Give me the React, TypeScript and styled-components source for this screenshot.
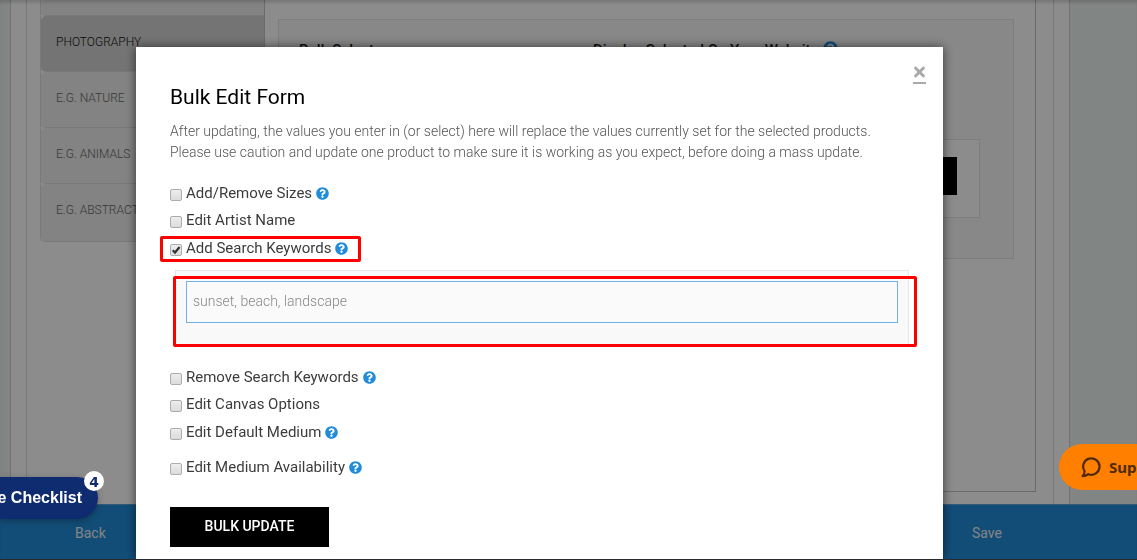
import React from 'react';
import styled, { createGlobalStyle } from 'styled-components';
import { FaQuestionCircle, FaTimes } from 'react-icons/fa';

const GlobalStyle = createGlobalStyle`
  * { box-sizing: border-box; }
  html, body { margin: 0; height: 100%; overflow: hidden; }
  body {
    background: #ecf2ee;
    font-family: Roboto, "Liberation Sans", sans-serif;
    font-size: 14px;
    color: #333;
  }
  #root { height: 100%; }
  h1, h2, p, ul { margin: 0; padding: 0; }
  button, textarea { font-family: inherit; }
`;

const Page = styled.div`
  display: flex;
  flex-direction: column;
  height: 100vh;
  overflow: hidden;
  border-bottom: 1px solid #2b2a30;
`;

const Content = styled.div`
  flex: 1;
  min-height: 0;
  margin: 0 67px 0 10px;
  padding: 0 15px;
  background: #fff;
  border: solid #cfcfcf;
  border-width: 0 1px;
`;

const Frame = styled.div`
  display: flex;
  align-items: flex-start;
  height: 100%;
  padding: 0 17px 0 13px;
  border: solid #dcdcdc;
  border-width: 0 1px;
`;

const Sidebar = styled.nav`
  width: 224px;
  flex: none;
`;

const Categories = styled.ul`
  list-style: none;
  border: solid #dcdcdc;
  border-width: 0 0 1px 1px;
  border-radius: 0 0 0 5px;
  overflow: hidden;
`;

const Category = styled.li<{ $active?: boolean; $short?: boolean }>`
  height: ${p => (p.$short ? 16 : 56)}px;
  background: ${p => (p.$active ? '#d3d3d3' : '#efefef')};
  border-bottom: 1px solid #dcdcdc;
  border-radius: 5px 0 0 5px;
  &:last-child { height: 57px; border-bottom: 0; }
`;

const CategoryLink = styled.a<{ $active?: boolean }>`
  display: block;
  padding: 0 15px;
  font-size: 12px;
  font-weight: 300;
  line-height: 52px;
  color: ${p => (p.$active ? '#111' : '#666')};
  text-decoration: none;
`;

const Main = styled.main`
  flex: 1;
  height: 492px;
  padding: 19px 21px 0 13px;
  border: solid #c4c4c4;
  border-width: 0 1px 1px;
`;

const Card = styled.section`
  height: 240px;
  padding: 20px 33px 0 20px;
  background: #f8f8f8;
  border: 1px solid #e3e3e3;
`;

const CardHeads = styled.div`
  display: grid;
  grid-template-columns: 294px 1fr;
  height: 99px;
`;

const CardHead = styled.h2`
  display: flex;
  font-size: 15px;
  font-weight: 500;
  line-height: 20px;
  color: #222;
`;

const CardActions = styled.div`
  display: flex;
  justify-content: flex-end;
  height: 79px;
  padding: 17px 22px;
  background: #fff;
  border: 1px solid #e3e3e3;
`;

const ApplyButton = styled.button`
  width: 120px;
  height: 38px;
  border: 0;
  background: #000;
`;

const Footer = styled.footer`
  flex: none;
  display: flex;
  justify-content: space-between;
  height: 55px;
  padding: 0 135px 0 75px;
  background: #218cda;
  border-top: 1px solid #5ba6dc;
`;

const FooterLink = styled.a`
  font-size: 14px;
  line-height: 56px;
  color: #f0f0f0;
  text-decoration: none;
`;

const Overlay = styled.div`
  position: fixed;
  inset: 0 0 1px;
  z-index: 1;
  display: flex;
  padding: 47px 194px 0 136px;
  background: rgba(0, 0, 0, 0.45);
  box-shadow: inset 0 4px 4px -2px rgba(0, 0, 0, 0.2);
  overflow: hidden;
`;

const Dialog = styled.div`
  position: relative;
  flex: 1;
  min-width: 0;
  padding: 32px 34px 12px;
  background: #fff;
  box-shadow: 0 0 10px rgba(0, 0, 0, 0.6);
`;

const CloseButton = styled.button`
  position: absolute;
  top: 17px;
  right: 17px;
  display: flex;
  justify-content: center;
  width: 13px;
  height: 20px;
  padding: 0;
  border: 0;
  border-bottom: 2px solid #aaa;
  background: none;
  color: #aaa;
  font-size: 16px;
`;

const Title = styled.h1`
  font-size: 21px;
  font-weight: 400;
  line-height: 36px;
  color: #000;
`;

const Intro = styled.p`
  margin-top: 6px;
  font-size: 14px;
  font-weight: 300;
  line-height: 21px;
  color: #555;
`;

const Form = styled.form`
  display: flex;
  flex-direction: column;
  align-items: flex-start;
  padding-top: 16px;
`;

const Row = styled.div<{ $help?: boolean; $marked?: boolean; $spaced?: boolean }>`
  position: relative;
  display: flex;
  align-items: center;
  height: ${p => (p.$help ? 28 : 27)}px;
  padding-top: ${p => (p.$help ? 1 : 0)}px;
  margin-top: ${p => (p.$spaced ? 7 : 0)}px;
  ${p => p.$marked && `
    &::after {
      content: '';
      position: absolute;
      inset: 2px -13px 0 -10px;
      border: 3px solid #fe0000;
      border-radius: 2px;
      pointer-events: none;
    }
  `}
`;

const Check = styled.input`
  appearance: none;
  flex: none;
  width: 12px;
  height: 12px;
  margin: 3px 4px 0 0;
  border: 1px solid #adadad;
  border-radius: 2px;
  background: linear-gradient(#ededed, #dcdcdc);
  &:checked {
    background: url("data:image/svg+xml,%3Csvg xmlns='http://www.w3.org/2000/svg' viewBox='0 0 10 10'%3E%3Cpath d='M1.7 5.2 4 7.5 8.6 2' fill='none' stroke='%23333' stroke-width='2.2'/%3E%3C/svg%3E") center / 10px 10px no-repeat, linear-gradient(#ededed, #dcdcdc);
  }
`;

const RowLabel = styled.label`
  font-size: 15px;
  line-height: 27px;
  color: #3c3c3c;
`;

const Help = styled(FaQuestionCircle)`
  flex: none;
  width: 13px;
  height: 13px;
  margin-left: 4px;
  color: #218cda;
`;

const HeadHelp = styled(Help)`
  width: 15px;
  height: 15px;
  margin-top: 1px;
`;

const KeywordPanel = styled.div`
  position: relative;
  align-self: stretch;
  margin: 8px 0 18px 5px;
  padding: 10px;
  height: 75px;
  background: #f9f9f9;
  border: 1px solid #e6e6e6;
  &::after {
    content: '';
    position: absolute;
    inset: 5px -9px -3px -3px;
    border: 3px solid #fe0000;
    border-radius: 2px;
    pointer-events: none;
  }
`;

const Keywords = styled.textarea`
  display: block;
  width: 100%;
  height: 42px;
  padding: 9px 6px;
  border: 1px solid #6fb3e8;
  outline: 0;
  background: #fafafa;
  font-size: 14px;
  font-weight: 300;
  line-height: 20px;
  resize: none;
  overflow: hidden;
  &::placeholder { color: #888; }
`;

const SubmitButton = styled.button`
  width: 159px;
  height: 40px;
  margin-top: 26px;
  padding: 0 6px 2px;
  border: 0;
  background: #000;
  color: #fff;
  font-size: 14px;
  font-weight: 500;
`;

const ChecklistTab = styled.button`
  position: fixed;
  left: 0;
  bottom: 41px;
  z-index: 2;
  display: flex;
  align-items: center;
  justify-content: flex-end;
  width: 98px;
  height: 42px;
  padding: 0 16px 0 0;
  border: 0;
  border-radius: 0 21px 21px 0;
  background: #102c70;
  box-shadow: 0 2px 6px rgba(0, 0, 0, 0.3);
  color: #fff;
  font: 700 16px "Liberation Sans", sans-serif;
  white-space: nowrap;
`;

const Count = styled.span`
  position: absolute;
  top: -6px;
  right: -6px;
  width: 20px;
  height: 20px;
  border-radius: 50%;
  background: #fff;
  color: #102c70;
  font: 700 14px/22px "DejaVu Sans", sans-serif;
  text-align: center;
`;

const SupportTab = styled.button`
  position: fixed;
  right: 0;
  bottom: 70px;
  z-index: 2;
  display: flex;
  align-items: center;
  gap: 8px;
  width: 78px;
  height: 46px;
  padding: 0 0 0 22px;
  border: 0;
  border-radius: 23px 0 0 23px;
  background: #ff7f00;
  color: #4f2a08;
  font: 700 15px "Noto Sans", sans-serif;
  white-space: nowrap;
  overflow: hidden;
  svg { flex: none; }
`;

const Option = ({ id, label, help, checked, spaced }: {
  id: string; label: string; help?: boolean; checked?: boolean; spaced?: boolean;
}) => (
  <Row $help={help} $marked={checked} $spaced={spaced}>
    <Check type="checkbox" id={id} defaultChecked={checked} />
    <RowLabel htmlFor={id}>{label}</RowLabel>
    {help && <Help aria-hidden />}
  </Row>
);

const categories = ['Photography', 'e.g. Nature', 'e.g. Animals', 'e.g. Abstract'];

export default function App() {
  return (
    <>
      <GlobalStyle />
      <Page>
        <Content>
          <Frame>
            <Sidebar>
              <Categories>
                <Category $short />
                {categories.map((name, i) => (
                  <Category key={name} $active={i === 0}>
                    <CategoryLink href="#" $active={i === 0}>{name.toUpperCase()}</CategoryLink>
                  </Category>
                ))}
              </Categories>
            </Sidebar>
            <Main>
              <Card>
                <CardHeads>
                  <CardHead>Bulk Select</CardHead>
                  <CardHead>Display Selected On Your Website <HeadHelp aria-hidden /></CardHead>
                </CardHeads>
                <CardActions>
                  <ApplyButton type="button" aria-label="Apply" />
                </CardActions>
              </Card>
            </Main>
          </Frame>
        </Content>
        <Footer>
          <FooterLink href="#">Back</FooterLink>
          <FooterLink href="#">Save</FooterLink>
        </Footer>
      </Page>

      <Overlay>
        <Dialog role="dialog" aria-labelledby="bulk-title">
          <CloseButton type="button" aria-label="Close"><FaTimes /></CloseButton>
          <Title id="bulk-title">Bulk Edit Form</Title>
          <Intro>
            After updating, the values you enter in (or select) here will replace the values currently set for the selected products.<br />
            Please use caution and update one product to make sure it is working as you expect, before doing a mass update.
          </Intro>
          <Form>
            <Option id="sizes" label="Add/Remove Sizes" help />
            <Option id="artist" label="Edit Artist Name" />
            <Option id="add-keywords" label="Add Search Keywords" help checked />
            <KeywordPanel>
              <Keywords aria-label="Search keywords" placeholder="sunset, beach, landscape" />
            </KeywordPanel>
            <Option id="remove-keywords" label="Remove Search Keywords" help />
            <Option id="canvas" label="Edit Canvas Options" />
            <Option id="medium" label="Edit Default Medium" help />
            <Option id="availability" label="Edit Medium Availability" help spaced />
            <SubmitButton type="button">BULK UPDATE</SubmitButton>
          </Form>
        </Dialog>
      </Overlay>

      <ChecklistTab type="button">
        e Checklist
        <Count>4</Count>
      </ChecklistTab>
      <SupportTab type="button">
        <svg width="20" height="21" viewBox="0 0 20 21" fill="none" stroke="currentColor" strokeWidth="2.2" strokeLinejoin="round">
          <path d="M3.600 14.200A8.200 8.200 0 1 1 7.400 17.200C5.600 18.600 3.600 19.200 1.600 19.200C2.800 17.800 3.500 16.200 3.600 14.200Z" />
        </svg>
        Support
      </SupportTab>
    </>
  );
}
